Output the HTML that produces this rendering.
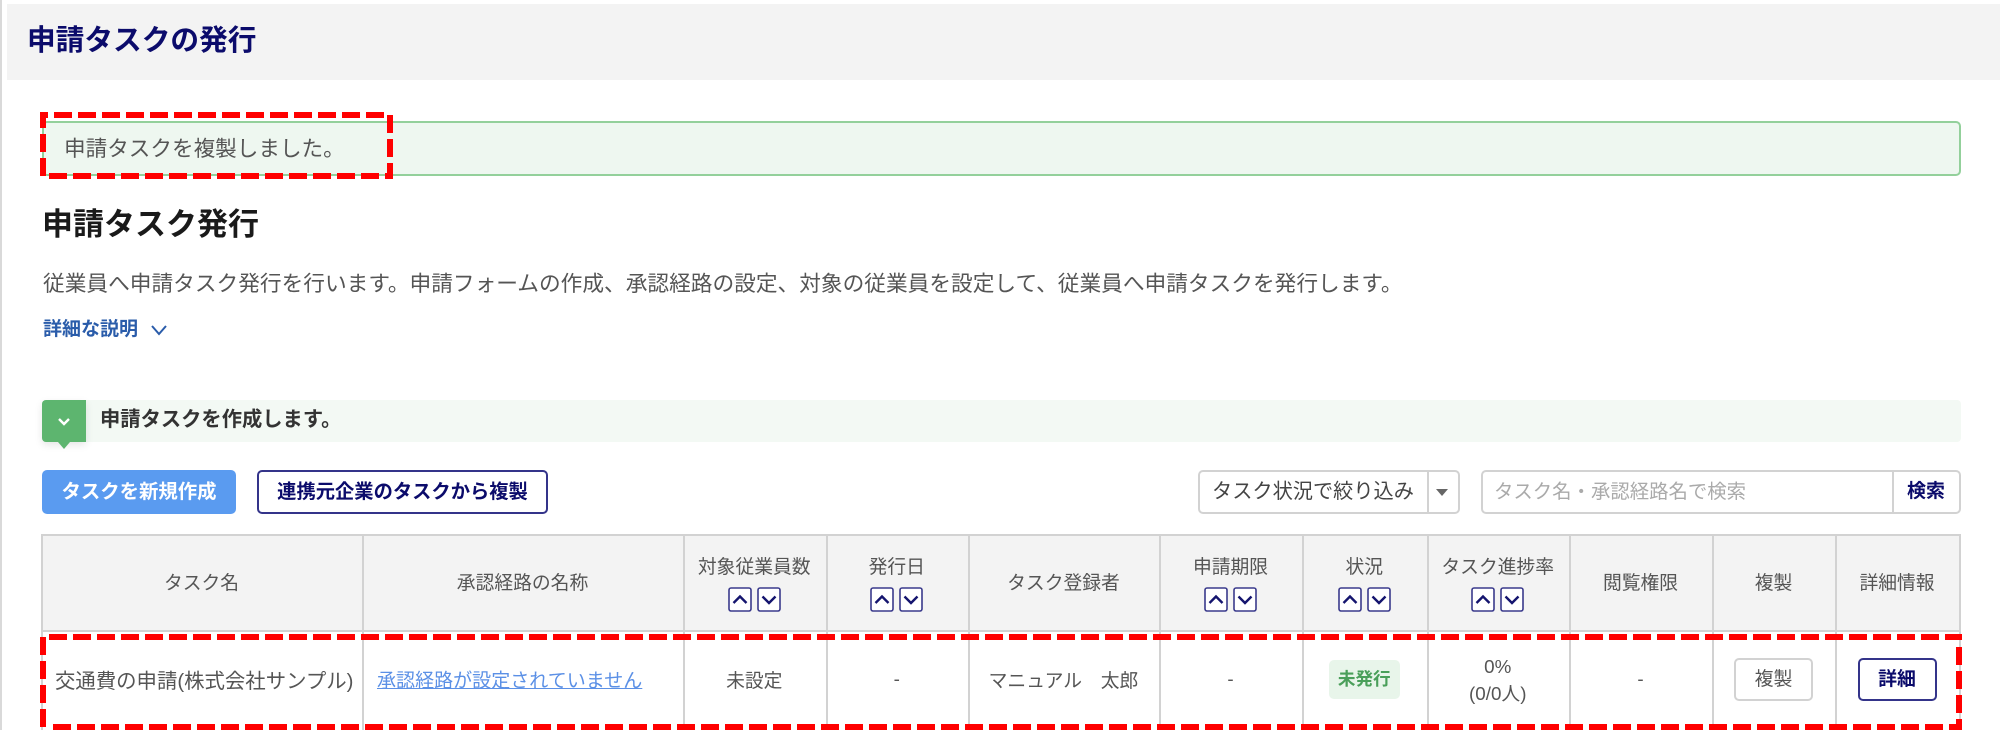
<!DOCTYPE html>
<html lang="ja">
<head>
<meta charset="utf-8">
<title>申請タスクの発行</title>
<style>
html,body{margin:0;padding:0;background:#fff}
body{width:2000px;height:730px;overflow:hidden;position:relative;font-family:"Liberation Sans","Noto Sans CJK JP",sans-serif;color:#555}
#w{position:absolute;left:0;top:0;width:2000px;height:730px;overflow:hidden;filter:blur(.35px)}
.a{position:absolute;white-space:nowrap;box-sizing:border-box}
.t{position:absolute;white-space:nowrap;line-height:30px;height:30px}
table{position:absolute;left:41px;top:534px;border-collapse:collapse;table-layout:fixed;width:1920px}
th,td{border:2px solid #d2d2d2;padding:0 2px 0 0;text-align:center;font-weight:400;font-size:18.8px;color:#555;vertical-align:middle;white-space:nowrap}
th{background:#f3f3f3;height:96px;box-sizing:border-box;line-height:30px}
th.m{padding-bottom:3px}
td{height:110px;padding-bottom:14px;box-sizing:border-box;background:#fff}
.s{display:flex;justify-content:center;gap:5px;margin-top:5px;height:25px}
.s svg{display:block}
.b{display:inline-block;box-sizing:border-box;width:79px;height:43px;line-height:39px;border-radius:5px;font-size:18.9px;background:#fff}
</style>
</head>
<body>
<div id="w">
<div class="a" style="left:0;top:0;width:2px;height:730px;background:#d9d9d9"></div>
<div class="a" style="left:7px;top:4px;width:1993px;height:76px;background:#f3f3f3"></div>
<div class="t" style="left:27px;top:26px;font-size:28.7px;font-weight:700;color:#0b0b6b">申請タスクの発行</div>

<div class="a" style="left:42px;top:121px;width:1919px;height:55px;background:#eef7f0;border:2px solid #93d09b;border-radius:5px"></div>
<div class="t" style="left:64px;top:134px;font-size:21.6px;color:#555">申請タスクを複製しました。</div>

<div class="t" style="left:42px;top:210px;font-size:31px;font-weight:700;color:#1a1a1a">申請タスク発行</div>
<div class="t" style="left:43px;top:269px;font-size:21.7px;color:#555">従業員へ申請タスク発行を行います。申請フォームの作成、承認経路の設定、対象の従業員を設定して、従業員へ申請タスクを発行します。</div>
<div class="t" style="left:43px;top:315px;font-size:19px;font-weight:700;color:#2a5caa">詳細な説明</div>
<svg class="a" style="left:150px;top:323px" width="18" height="14" viewBox="0 0 18 14"><polyline points="2,3 9,11 16,3" fill="none" stroke="#2a5caa" stroke-width="2"/></svg>

<div class="a" style="left:42px;top:400px;width:1919px;height:42px;background:#f3f9f4;border-radius:4px"></div>
<div class="a" style="left:42px;top:400px;width:44px;height:42px;background:#5db56f;border-radius:4px 0 0 4px;box-shadow:0 3px 8px rgba(0,0,0,.10)"></div>
<svg class="a" style="left:42px;top:400px" width="44" height="50" viewBox="0 0 44 50"><polygon points="16,42 28,42 22,49" fill="#5db56f"/><polyline points="17,19 22,24 27,19" fill="none" stroke="#fff" stroke-width="2.4"/></svg>
<div class="t" style="left:100px;top:405px;font-size:20.3px;font-weight:700;color:#333">申請タスクを作成します。</div>

<div class="a" style="left:42px;top:470px;width:194px;height:44px;background:#5a9bf0;border-radius:5px;color:#fff;font-size:19.4px;font-weight:700;text-align:center;line-height:45px">タスクを新規作成</div>
<div class="a" style="left:257px;top:470px;width:291px;height:44px;background:#fff;border:2px solid #34348a;border-radius:5px;color:#0b0b6b;font-size:19.3px;font-weight:700;text-align:center;line-height:41px">連携元企業のタスクから複製</div>

<div class="a" style="left:1198px;top:470px;width:262px;height:44px;border:2px solid #d2d2d2;border-radius:5px;background:#fff"></div>
<div class="a" style="left:1427px;top:470px;width:2px;height:44px;background:#d2d2d2"></div>
<div class="t" style="left:1212px;top:477px;font-size:20.2px;color:#444">タスク状況で絞り込み</div>
<svg class="a" style="left:1436px;top:489px" width="12" height="7" viewBox="0 0 12 7"><polygon points="0,0 12,0 6,7" fill="#666"/></svg>

<div class="a" style="left:1481px;top:470px;width:480px;height:44px;border:2px solid #d2d2d2;border-radius:5px;background:#fff"></div>
<div class="a" style="left:1892px;top:470px;width:2px;height:44px;background:#d2d2d2"></div>
<div class="t" style="left:1494px;top:477px;font-size:19.4px;color:#aaa">タスク名・承認経路名で検索</div>
<div class="t" style="left:1907px;top:477px;font-size:19px;font-weight:700;color:#0b0b6b">検索</div>

<table>
<colgroup><col style="width:321px"><col style="width:321px"><col style="width:142.5px"><col style="width:142.5px"><col style="width:191px"><col style="width:143px"><col style="width:124.5px"><col style="width:142.5px"><col style="width:143px"><col style="width:123px"><col style="width:124px"></colgroup>
<tr>
<th>タスク名</th>
<th>承認経路の名称</th>
<th class="m">対象従業員数<div class="s"><svg width="24" height="25" viewBox="0 0 24 25"><rect x="1" y="1" width="22" height="23" rx="2" fill="#fff" stroke="#3a3a8c" stroke-width="1.6"/><polyline points="5.5,16 12,9.5 18.5,16" fill="none" stroke="#14146e" stroke-width="2.4"/></svg><svg width="24" height="25" viewBox="0 0 24 25"><rect x="1" y="1" width="22" height="23" rx="2" fill="#fff" stroke="#3a3a8c" stroke-width="1.6"/><polyline points="5.5,9.5 12,16 18.5,9.5" fill="none" stroke="#14146e" stroke-width="2.4"/></svg></div></th>
<th class="m">発行日<div class="s"><svg width="24" height="25" viewBox="0 0 24 25"><rect x="1" y="1" width="22" height="23" rx="2" fill="#fff" stroke="#3a3a8c" stroke-width="1.6"/><polyline points="5.5,16 12,9.5 18.5,16" fill="none" stroke="#14146e" stroke-width="2.4"/></svg><svg width="24" height="25" viewBox="0 0 24 25"><rect x="1" y="1" width="22" height="23" rx="2" fill="#fff" stroke="#3a3a8c" stroke-width="1.6"/><polyline points="5.5,9.5 12,16 18.5,9.5" fill="none" stroke="#14146e" stroke-width="2.4"/></svg></div></th>
<th>タスク登録者</th>
<th class="m">申請期限<div class="s"><svg width="24" height="25" viewBox="0 0 24 25"><rect x="1" y="1" width="22" height="23" rx="2" fill="#fff" stroke="#3a3a8c" stroke-width="1.6"/><polyline points="5.5,16 12,9.5 18.5,16" fill="none" stroke="#14146e" stroke-width="2.4"/></svg><svg width="24" height="25" viewBox="0 0 24 25"><rect x="1" y="1" width="22" height="23" rx="2" fill="#fff" stroke="#3a3a8c" stroke-width="1.6"/><polyline points="5.5,9.5 12,16 18.5,9.5" fill="none" stroke="#14146e" stroke-width="2.4"/></svg></div></th>
<th class="m">状況<div class="s"><svg width="24" height="25" viewBox="0 0 24 25"><rect x="1" y="1" width="22" height="23" rx="2" fill="#fff" stroke="#3a3a8c" stroke-width="1.6"/><polyline points="5.5,16 12,9.5 18.5,16" fill="none" stroke="#14146e" stroke-width="2.4"/></svg><svg width="24" height="25" viewBox="0 0 24 25"><rect x="1" y="1" width="22" height="23" rx="2" fill="#fff" stroke="#3a3a8c" stroke-width="1.6"/><polyline points="5.5,9.5 12,16 18.5,9.5" fill="none" stroke="#14146e" stroke-width="2.4"/></svg></div></th>
<th class="m">タスク進捗率<div class="s"><svg width="24" height="25" viewBox="0 0 24 25"><rect x="1" y="1" width="22" height="23" rx="2" fill="#fff" stroke="#3a3a8c" stroke-width="1.6"/><polyline points="5.5,16 12,9.5 18.5,16" fill="none" stroke="#14146e" stroke-width="2.4"/></svg><svg width="24" height="25" viewBox="0 0 24 25"><rect x="1" y="1" width="22" height="23" rx="2" fill="#fff" stroke="#3a3a8c" stroke-width="1.6"/><polyline points="5.5,9.5 12,16 18.5,9.5" fill="none" stroke="#14146e" stroke-width="2.4"/></svg></div></th>
<th>閲覧権限</th>
<th>複製</th>
<th>詳細情報</th>
</tr>
<tr>
<td style="font-size:20.4px;text-align:left;padding-left:12px">交通費の申請(株式会社サンプル)</td>
<td style="text-align:left;padding-left:13px;font-size:19.05px;color:#5b90e6"><span style="text-decoration:underline">承認経路が設定されていません</span></td>
<td>未設定</td>
<td>-</td>
<td>マニュアル　太郎</td>
<td>-</td>
<td><span style="display:inline-block;width:71px;height:39px;line-height:38px;background:#e8f5ea;border-radius:5px;color:#4a9f5a;font-weight:700;font-size:17.6px">未発行</span></td>
<td style="line-height:27px;padding-bottom:12px">0%<br>(0/0人)</td>
<td>-</td>
<td><span class="b" style="border:2px solid #d2d2d2">複製</span></td>
<td><span class="b" style="border:2px solid #34348a;color:#0b0b6b;font-weight:700">詳細</span></td>
</tr>
</table>

<svg class="a" style="left:0;top:0" width="2000" height="730" viewBox="0 0 2000 730" fill="none" stroke="#ff0000" stroke-width="6">
<g stroke-dasharray="18 6">
<line x1="54" y1="115" x2="384" y2="115"/>
<line x1="49" y1="176" x2="393" y2="176"/>
<line x1="43" y1="134" x2="43" y2="176"/>
<line x1="390" y1="115" x2="390" y2="179"/>
<line x1="49" y1="637" x2="1962" y2="637"/>
<line x1="53" y1="727" x2="1962" y2="727"/>
<line x1="43" y1="637" x2="43" y2="730"/>
<line x1="1959" y1="647" x2="1959" y2="725"/>
</g>
<line x1="43" y1="112" x2="43" y2="128"/>
<line x1="40" y1="115" x2="48" y2="115"/>
</svg>
</div>
</body>
</html>
